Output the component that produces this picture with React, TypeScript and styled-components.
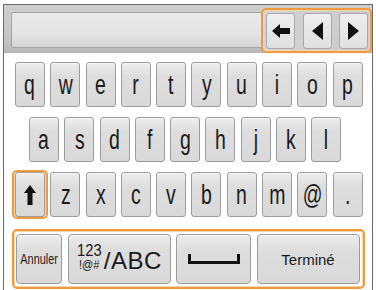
import { createGlobalStyle, styled } from "styled-components";

const GlobalStyle = createGlobalStyle`
    html, body {
        margin: 0;
        padding: 0;
        background: #ffffff;
        overflow: hidden;
    }
    body {
        font-family: "Liberation Sans", Arial, sans-serif;
    }
`;

const rows = [
    ["q", "w", "e", "r", "t", "y", "u", "i", "o", "p"],
    ["a", "s", "d", "f", "g", "h", "j", "k", "l"],
    ["z", "x", "c", "v", "b", "n", "m", "@", "."],
];

const App = () => {
    return (
        <>
            <GlobalStyle />
            <StyledFrame>
                <StyledTopBar>
                    <StyledField />
                    <StyledNavGroup>
                        <StyledNavKey>
                            <svg width="18" height="14" viewBox="0 0 18 14">
                                <path d="M0 7 L8 0 L8 4 L18 4 L18 10 L8 10 L8 14 Z" fill="#111" />
                            </svg>
                        </StyledNavKey>
                        <StyledNavKey>
                            <svg width="11" height="18" viewBox="0 0 11 18">
                                <path d="M0 9 L11 0 L11 18 Z" fill="#111" />
                            </svg>
                        </StyledNavKey>
                        <StyledNavKey>
                            <svg width="11" height="18" viewBox="0 0 11 18">
                                <path d="M11 9 L0 0 L0 18 Z" fill="#111" />
                            </svg>
                        </StyledNavKey>
                    </StyledNavGroup>
                </StyledTopBar>
                <StyledKeyboard>
                    <StyledRow>
                        {rows[0].map((k) => (
                            <StyledKey key={k}>
                                <StyledLetter>{k}</StyledLetter>
                            </StyledKey>
                        ))}
                    </StyledRow>
                    <StyledRow $indent={14}>
                        {rows[1].map((k) => (
                            <StyledKey key={k}>
                                <StyledLetter>{k}</StyledLetter>
                            </StyledKey>
                        ))}
                    </StyledRow>
                    <StyledRow>
                        <StyledShiftRing>
                            <StyledKey>
                                <svg width="12" height="20" viewBox="0 0 12 20">
                                    <path d="M6 0 L12 8 L8.5 8 L8.5 20 L3.5 20 L3.5 8 L0 8 Z" fill="#111" />
                                </svg>
                            </StyledKey>
                        </StyledShiftRing>
                        {rows[2].map((k) => (
                            <StyledKey key={k}>
                                <StyledLetter>{k}</StyledLetter>
                            </StyledKey>
                        ))}
                    </StyledRow>
                    <StyledActionGroup>
                        <StyledActionKey $width={46}>
                            <StyledSmallLabel>Annuler</StyledSmallLabel>
                        </StyledActionKey>
                        <StyledActionKey $width={103}>
                            <StyledStack>
                                <StyledStackTop>123</StyledStackTop>
                                <StyledStackBottom>!@#</StyledStackBottom>
                            </StyledStack>
                            <StyledBigLabel>/ABC</StyledBigLabel>
                        </StyledActionKey>
                        <StyledActionKey $width={75}>
                            <svg width="52" height="10" viewBox="0 0 52 10">
                                <path d="M1.5 0 L1.5 8.5 L50.5 8.5 L50.5 0" stroke="#111" strokeWidth="3" fill="none" />
                            </svg>
                        </StyledActionKey>
                        <StyledActionKey $width={103}>
                            <StyledDoneLabel>Terminé</StyledDoneLabel>
                        </StyledActionKey>
                    </StyledActionGroup>
                </StyledKeyboard>
            </StyledFrame>
        </>
    );
};

const StyledFrame = styled.div`
    margin: 4px 3px 0 3px;
    height: 300px;
    border: 1px solid #6a6a6a;
    border-bottom: none;
    box-sizing: border-box;
    background: #ffffff;
`;

const StyledTopBar = styled.div`
    display: grid;
    grid-template-columns: 1fr;
    height: 48px;
    background: linear-gradient(#cfcfcf, #c2c2c2 80%, #b8b8b8);
`;

const StyledField = styled.div`
    grid-area: 1 / 1;
    margin: 7px 3px 0 7px;
    height: 36px;
    box-sizing: border-box;
    border: 1px solid #a2a2a2;
    border-radius: 2px;
    background: linear-gradient(#e9e9e9, #e4e4e4 60%, #d6d6d6);
`;

const StyledNavGroup = styled.div`
    grid-area: 1 / 1;
    justify-self: end;
    align-self: start;
    margin-top: 3px;
    width: 111px;
    height: 45px;
    box-sizing: border-box;
    padding: 3px 2px 0 3px;
    display: flex;
    justify-content: space-between;
    border: 2px solid #ef9a3c;
    border-radius: 5px;
    box-shadow: inset 0 0 0 1px #f8d6ad;
    background: linear-gradient(90deg, #d4d4d4, #c9c9c9);
`;

const StyledNavKey = styled.div`
    width: 29px;
    height: 36px;
    box-sizing: border-box;
    display: flex;
    align-items: center;
    justify-content: center;
    border: 1px solid #a8a8a8;
    border-radius: 3px;
    background: linear-gradient(#eeeeee, #e0e0e0);
`;

const StyledKeyboard = styled.div`
    display: flex;
    flex-direction: column;
    gap: 10px;
    padding: 9px 0 0 11px;
`;

const StyledRow = styled.div<{ $indent?: number }>`
    display: flex;
    gap: 5.3px;
    padding-left: ${(p) => p.$indent ?? 0}px;
    height: 45px;
    align-items: center;
`;

const StyledKey = styled.div`
    width: 30px;
    height: 45px;
    box-sizing: border-box;
    display: flex;
    align-items: center;
    justify-content: center;
    border: 1px solid #9c9c9c;
    border-radius: 3px;
    background: linear-gradient(#ededed, #dedede 30%, #d9d9d9);
    box-shadow: inset 0 1px 0 #f7f7f7;
    color: #1a1a1a;
`;

const StyledShiftRing = styled.div`
    margin: 0 -3px 0 -3px;
    padding: 1px 1px;
    height: 49px;
    box-sizing: border-box;
    border: 2px solid #ef9a3c;
    border-radius: 5px;
    box-shadow: inset 0 0 0 1px #f8d6ad;
    display: flex;
    align-items: center;
    justify-content: center;
`;

const StyledLetter = styled.span`
    display: inline-block;
    font-size: 27px;
    line-height: 1;
    transform: scaleX(0.72);
    margin-top: 1px;
`;

const StyledActionGroup = styled.div`
    display: flex;
    align-items: center;
    margin: 2px 0 0 -3px;
    width: 353px;
    height: 60px;
    box-sizing: border-box;
    padding: 0 0 0 2px;
    gap: 5.5px;
    border: 2px solid #ef9a3c;
    border-radius: 5px;
    box-shadow: inset 0 0 0 1px #f8d6ad;
`;

const StyledActionKey = styled.div<{ $width: number }>`
    width: ${(p) => p.$width}px;
    height: 50px;
    box-sizing: border-box;
    display: flex;
    align-items: center;
    justify-content: center;
    border: 1px solid #9c9c9c;
    border-radius: 4px;
    background: linear-gradient(#ededed, #dedede 30%, #d9d9d9);
    box-shadow: inset 0 1px 0 #f7f7f7;
    color: #1a1a1a;
`;

const StyledSmallLabel = styled.span`
    display: inline-block;
    font-size: 14px;
    transform: scaleX(0.78);
    white-space: nowrap;
`;

const StyledStack = styled.div`
    display: flex;
    flex-direction: column;
    align-items: center;
    margin-right: 1px;
    margin-top: -3px;
`;

const StyledStackTop = styled.div`
    font-size: 16px;
    line-height: 16px;
    transform: scaleX(0.92);
`;

const StyledStackBottom = styled.div`
    font-size: 12px;
    line-height: 13px;
    transform: scaleX(0.92);
`;

const StyledBigLabel = styled.span`
    font-size: 24px;
    margin-top: 4px;
    letter-spacing: 0.5px;
`;

const StyledDoneLabel = styled.span`
    font-size: 15px;
`;

export default App;
